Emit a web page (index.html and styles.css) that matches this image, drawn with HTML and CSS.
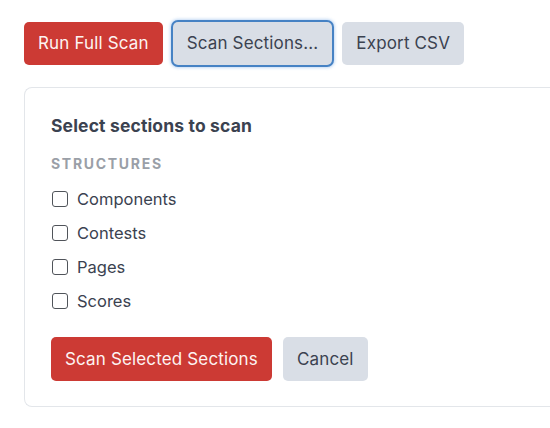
FILE: index.html
```html
<!DOCTYPE html>
<html lang="en">
<head>
<meta charset="utf-8">
<title>Scan</title>
<link rel="stylesheet" href="styles.css">
</head>
<body>
<div class="page">
  <div class="toolbar">
    <button class="btn btn-red">Run Full Scan</button>
    <button class="btn btn-gray btn-focus">Scan Sections...</button>
    <button class="btn btn-gray">Export CSV</button>
  </div>
  <div class="card">
    <h2 class="title">Select sections to scan</h2>
    <div class="group-label">STRUCTURES</div>
    <div class="options">
      <label class="option"><input type="checkbox" class="check"><span>Components</span></label>
      <label class="option"><input type="checkbox" class="check"><span>Contests</span></label>
      <label class="option"><input type="checkbox" class="check"><span>Pages</span></label>
      <label class="option"><input type="checkbox" class="check"><span>Scores</span></label>
    </div>
    <div class="actions">
      <button class="btn btn-red btn-lg">Scan Selected Sections</button>
      <button class="btn btn-gray btn-lg">Cancel</button>
    </div>
  </div>
</div>
</body>
</html>
```

FILE: styles.css
```css
html, body {
  margin: 0;
  padding: 0;
  background: #ffffff;
}
body {
  font-family: Inter, "Noto Sans", "Liberation Sans", sans-serif;
  color: #3b4250;
}
.page {
  padding: 22px 0 0 24px;
}
.toolbar {
  display: flex;
  gap: 10px;
}
.btn {
  font-family: inherit;
  font-size: 17px;
  letter-spacing: 0.15px;
  height: 43px;
  padding: 0 14px;
  border: none;
  border-radius: 5px;
  cursor: pointer;
  line-height: 1;
}
.btn-red {
  background: #cc3a34;
  color: #fdf3f2;
}
.btn-gray {
  background: #d9dee6;
  color: #3b4250;
}
.btn-focus {
  box-shadow: 0 0 0 2px #4682c4, 0 0 3px 3px rgba(120, 170, 230, 0.45);
}
.btn-lg {
  height: 44px;
}
.card {
  margin-top: 22px;
  border: 1px solid #e3e6ea;
  border-right: none;
  border-radius: 8px 0 0 8px;
  padding: 26px 0 25px 26px;
}
.title {
  margin: 0;
  font-size: 17.5px;
  letter-spacing: 0.15px;
  line-height: 24px;
  font-weight: 700;
  color: #3b4250;
}
.group-label {
  margin-top: 16px;
  font-size: 14px;
  line-height: 20px;
  font-weight: 700;
  letter-spacing: 1.7px;
  color: #9a9fa7;
}
.options {
  margin-top: 13px;
  display: flex;
  flex-direction: column;
  gap: 10px;
}
.option {
  display: flex;
  align-items: center;
  gap: 9px;
  font-size: 16.5px;
  line-height: 24px;
  color: #3b4250;
}
.check {
  appearance: none;
  -webkit-appearance: none;
  margin: 0 0 0 1px;
  width: 16px;
  height: 16px;
  border: 1.5px solid #50545a;
  border-radius: 3px;
  background: #fff;
}
.actions {
  margin-top: 24px;
  display: flex;
  gap: 11px;
}
```
